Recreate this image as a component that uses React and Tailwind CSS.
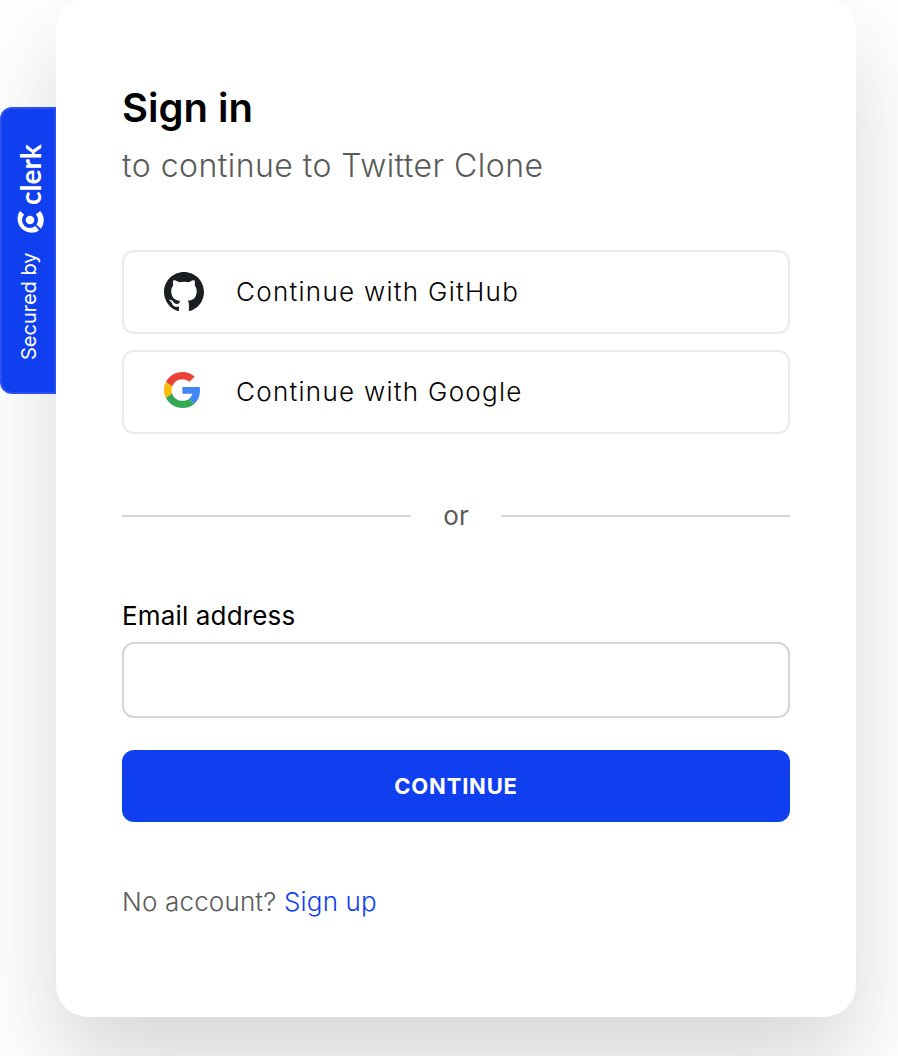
import React from "react";

function GitHubMark() {
  return (
    <svg className="size-10" viewBox="0 0.297 24 24" fill="#1b1f23">
      <path d="M12 .297c-6.63 0-12 5.373-12 12 0 5.303 3.438 9.8 8.205 11.385.6.113.82-.258.82-.577 0-.285-.01-1.04-.015-2.04-3.338.724-4.042-1.61-4.042-1.61C4.422 18.07 3.633 17.7 3.633 17.7c-1.087-.744.084-.729.084-.729 1.205.084 1.838 1.236 1.838 1.236 1.07 1.835 2.809 1.305 3.495.998.108-.776.417-1.305.76-1.605-2.665-.3-5.466-1.332-5.466-5.93 0-1.31.465-2.38 1.235-3.22-.135-.303-.54-1.523.105-3.176 0 0 1.005-.322 3.3 1.23.96-.267 1.98-.399 3-.405 1.02.006 2.04.138 3 .405 2.28-1.552 3.285-1.23 3.285-1.23.645 1.653.24 2.873.12 3.176.765.84 1.23 1.91 1.23 3.22 0 4.61-2.805 5.625-5.475 5.92.42.36.81 1.096.81 2.22 0 1.606-.015 2.896-.015 3.286 0 .315.21.69.825.57C20.565 22.092 24 17.592 24 12.297c0-6.627-5.373-12-12-12" />
    </svg>
  );
}

function GoogleMark() {
  return (
    <svg className="size-9" viewBox="0 0 47 48" preserveAspectRatio="none">
      <path fill="#EA4335" d="M24 9.5c3.54 0 6.71 1.22 9.21 3.6l6.85-6.85C35.9 2.38 30.47 0 24 0 14.62 0 6.51 5.38 2.56 13.22l7.98 6.19C12.43 13.72 17.74 9.5 24 9.5z" />
      <path fill="#4285F4" d="M46.98 24.55c0-1.57-.15-3.09-.38-4.55H24v9.02h12.94c-.58 2.96-2.26 5.48-4.78 7.18l7.73 6c4.51-4.18 7.09-10.36 7.09-17.65z" />
      <path fill="#FBBC05" d="M10.53 28.59c-.48-1.45-.76-2.99-.76-4.59s.27-3.14.76-4.59l-7.98-6.19C.92 16.46 0 20.12 0 24c0 3.88.92 7.54 2.56 10.78l7.97-6.19z" />
      <path fill="#34A853" d="M24 48c6.48 0 11.93-2.13 15.89-5.81l-7.73-6c-2.15 1.45-4.92 2.3-8.16 2.3-6.26 0-11.57-4.22-13.47-9.91l-7.98 6.19C6.51 42.62 14.62 48 24 48z" />
    </svg>
  );
}

function ClerkMark() {
  return (
    <svg className="h-6 w-7" viewBox="0 0 28 24" fill="#fff">
      <circle cx="14" cy="10" r="4.3" />
      <path d="M3.9 .9L8.1 4.6A8 8 0 0 0 19.35 15.95L23.2 20.4A14 14 0 0 1 3.9 .9Z" />
      <path d="M24.2 .9L19.9 4.6A8 8 0 0 1 20.5 14.7L24.9 18.7A14 14 0 0 0 24.2 .9Z" />
    </svg>
  );
}

function SecuredBadge() {
  return (
    <div className="flex h-[287px] w-14 flex-col items-center rounded-l-xl border-2 border-[#2b50f1] bg-[#103fef] pt-8 text-white">
      <div className="ml-1 h-16 w-7 rotate-180 font-['Lato',sans-serif] text-[28px] leading-7 font-bold [writing-mode:vertical-rl]">clerk</div>
      <div className="mt-[5px] ml-1"><ClerkMark /></div>
      <div className="mt-4 ml-0.5 h-[110px] w-7 rotate-180 text-[20px] leading-7 [writing-mode:vertical-rl]">Secured by</div>
    </div>
  );
}

function SocialButton({ icon, children }) {
  return (
    <button className="flex h-[84px] w-full items-center rounded-xl border-2 border-[#ebebeb] pl-10 text-left">
      <span className="flex h-10 w-[72px] items-start">{icon}</span>
      <span className="text-[26px] leading-8 font-light tracking-[1.28px] text-black">{children}</span>
    </button>
  );
}

export default function App() {
  return (
    <div className="flex h-[1056px] w-[898px] items-start overflow-hidden bg-white font-['Inter',sans-serif]">
      <div className="relative z-10 mt-[107px] shrink-0"><SecuredBadge /></div>
      <main className="-mt-0.5 h-[1019px] w-[800px] shrink-0 rounded-[32px] bg-white px-[66px] shadow-[0_48px_96px_rgba(0,0,0,0.16)]">
        <h1 className="mt-[86px] text-[40px] leading-[48px] font-semibold text-black">Sign in</h1>
        <h2 className="mt-2 text-[32px] leading-[52px] font-light tracking-[0.46px] text-[#5a5a5a]">to continue to Twitter Clone</h2>
        <div className="mt-[58px] flex flex-col gap-4">
          <SocialButton icon={<GitHubMark />}>Continue with GitHub</SocialButton>
          <SocialButton icon={<GoogleMark />}>Continue with Google</SocialButton>
        </div>
        <div className="mt-[66px] flex h-8 items-center">
          <div className="h-0.5 flex-1 bg-[#d6d6d6]" />
          <span className="w-[90px] text-center text-[26px] leading-8 text-[#5a5a5a]">or</span>
          <div className="h-0.5 flex-1 bg-[#d6d6d6]" />
        </div>
        <label className="mt-[68px] block text-[26px] leading-8 tracking-[0.15px] text-black" htmlFor="email">Email address</label>
        <input id="email" className="mt-[10px] block h-[76px] w-full rounded-xl border-2 border-[#d6d6d6] px-5 text-[26px]" />
        <button className="mt-8 block h-[72px] w-full rounded-xl bg-[#103fef] text-[22px] font-bold tracking-[0.8px] text-white">CONTINUE</button>
        <p className="mt-16 text-[26px] leading-8 font-light tracking-[0.17px] text-[#5a5a5a]">
          No account? <a className="text-[#103fef]">Sign up</a>
        </p>
      </main>
    </div>
  );
}
